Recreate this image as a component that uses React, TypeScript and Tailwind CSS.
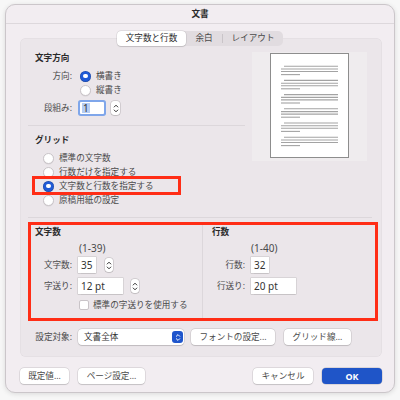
import type { ReactNode } from 'react';

const FONT = "font-['Noto_Sans','Noto_Sans_CJK_JP',sans-serif]";

function Radio({ on }: { on?: boolean }) {
  return on ? (
    <span className="flex size-[11px] shrink-0 items-center justify-center rounded-full bg-[#1f5ad6] shadow-[inset_0_0_0_0.5px_rgba(0,0,0,0.25)]">
      <span className="size-[4.5px] rounded-full bg-white" />
    </span>
  ) : (
    <span className="size-[11px] shrink-0 rounded-full border border-[#c9c4c8] bg-white shadow-[0_0.5px_0.5px_rgba(0,0,0,0.08)]" />
  );
}

function Stepper({ cls = '' }: { cls?: string }) {
  return (
    <span
      className={`flex h-[14px] w-[8px] items-center justify-center rounded-[3px] bg-white shadow-[0_0_0_0.5px_rgba(0,0,0,0.2),0_0.5px_1px_rgba(0,0,0,0.15)] ${cls}`}
    >
      <svg width="6" height="11" viewBox="0 0 6 11">
        <path
          d="M1.2 4 L3 2.2 L4.8 4 M1.2 7 L3 8.8 L4.8 7"
          stroke="#333"
          strokeWidth="1"
          fill="none"
          strokeLinecap="round"
          strokeLinejoin="round"
        />
      </svg>
    </span>
  );
}

function Input({ cls, children }: { cls: string; children: ReactNode }) {
  return (
    <span
      className={`flex h-[16px] items-center bg-white pl-[3px] text-[10px] leading-none text-[#333] shadow-[0_0_0_0.5px_rgba(0,0,0,0.16),0_0.5px_1px_rgba(0,0,0,0.08)] ${cls}`}
    >
      {children}
    </span>
  );
}

function Btn({ cls, children }: { cls: string; children: ReactNode }) {
  return (
    <span
      className={`flex h-[16px] items-center justify-center rounded-[4px] bg-white text-[8.6px] leading-none text-[#4a4a4a] shadow-[0_0_0_0.5px_rgba(0,0,0,0.15),0_0.5px_1px_rgba(0,0,0,0.12)] ${cls}`}
    >
      {children}
    </span>
  );
}

function PagePreview() {
  const groups = [0, 1, 2, 3, 4, 5];
  return (
    <svg width="77" height="103" viewBox="0 0 77 103">
      {groups.map((g) => {
        const y = 12.2 + g * 14.2;
        return (
          <g key={g} stroke="#a3a3a3" strokeWidth="1.1">
            <line x1="13" y1={y} x2="67" y2={y} />
            <line x1="10" y1={y + 2.8} x2="67" y2={y + 2.8} />
            <line x1="10" y1={y + 5.3} x2="67" y2={y + 5.3} />
            <line x1="10" y1={y + 8.4} x2="29" y2={y + 8.4} />
          </g>
        );
      })}
    </svg>
  );
}

export default function App() {
  const label = 'text-right text-[8.6px] leading-[12px] text-[#4a4a4a]';
  const head = 'text-[8.6px] font-bold leading-[12px] text-[#2a2a2a]';
  const body = 'text-[8.6px] leading-[12px] text-[#4a4a4a]';

  return (
    <div className={`h-[400px] w-[400px] bg-[#f7f7f7] pl-[5px] pt-[4px] ${FONT}`}>
      <div className="flex h-[389px] w-[390px] flex-col rounded-[10px] border border-[#cbc6ca] bg-[#f2edf1] shadow-[0_1px_5px_rgba(0,0,0,0.12)]">
        {/* title bar */}
        <div className="flex h-[19px] shrink-0 items-center justify-center border-b border-[#ddd8dc] text-[8.6px] font-bold leading-none text-[#2a2a2a]">
          文書
        </div>

        {/* tabs */}
        <div className="relative z-10 -mb-[8px] mt-[7px] flex justify-center">
          <div className="flex h-[15px] w-[166px] items-center rounded-[5px] bg-[#e1dce0] text-[8.6px] leading-none text-[#4a4a4a]">
            <span className="flex h-[15px] w-[69px] items-center justify-center rounded-[4px] bg-white text-[#2a2a2a] shadow-[0_0_0_0.5px_rgba(0,0,0,0.12),0_0.5px_1px_rgba(0,0,0,0.12)]">
              文字数と行数
            </span>
            <span className="flex w-[36px] justify-center">余白</span>
            <span className="h-[9px] w-px bg-[#c9c4c8]" />
            <span className="flex w-[60px] justify-center">レイアウト</span>
          </div>
        </div>

        {/* panel */}
        <div className="ml-[14px] flex h-[319px] w-[362px] flex-col rounded-[6px] bg-[#ebe6ea] shadow-[inset_0_0_0_0.5px_rgba(0,0,0,0.05)]">
          <div className="flex">
            <div className="flex w-[225px] flex-col">
              <div className={`mt-[14px] h-[12px] pl-[15px] ${head}`}>文字方向</div>
              <div className="mt-[6px] flex h-[12px] items-center">
                <span className={`w-[52px] ${label}`}>方向:</span>
                <span className="ml-[8px]">
                  <Radio on />
                </span>
                <span className={`ml-[5px] ${body}`}>横書き</span>
              </div>
              <div className="mt-[2px] flex h-[12px] items-center pl-[60px]">
                <Radio />
                <span className={`ml-[5px] ${body}`}>縦書き</span>
              </div>
              <div className="mt-[4px] flex h-[16px] items-center">
                <span className={`w-[52px] ${label}`}>段組み:</span>
                <span className="ml-[8px] flex h-[12px] w-[24px] items-center rounded-[1px] bg-white pl-[2px] text-[10px] leading-none text-[#333] ring-[2px] ring-[#7fa6ea]">
                  <span className="bg-[#b5cdf3] px-[1px]">1</span>
                </span>
                <Stepper cls="ml-[7px] w-[9px]" />
              </div>
              <div className="ml-[8px] mt-[9px] h-px w-[217px] bg-[#dcd7db]" />
              <div className={`mt-[8px] h-[12px] pl-[15px] ${head}`}>グリッド</div>
              <div className="mt-[5px] flex h-[14px] items-center gap-[5px] pl-[23px]">
                <Radio />
                <span className={body}>標準の文字数</span>
              </div>
              <div className="flex h-[14px] items-center gap-[5px] pl-[23px]">
                <Radio />
                <span className={body}>行数だけを指定する</span>
              </div>
              <div className="relative flex h-[14px] items-center gap-[5px] pl-[23px]">
                <Radio on />
                <span className={body}>文字数と行数を指定する</span>
                <span className="absolute left-[12px] top-[-3px] h-[19px] w-[149px] border-[3px] border-[#ff2d16]" />
              </div>
              <div className="flex h-[14px] items-center gap-[5px] pl-[23px]">
                <Radio />
                <span className={body}>原稿用紙の設定</span>
              </div>
            </div>

            <div className="ml-[7px] mt-[14px] h-[109px] w-[115px] bg-[#efecee]">
              <div className="ml-[18px] mt-[1px] h-[105px] w-[79px] border border-[#8d8d8d] bg-white">
                <PagePreview />
              </div>
            </div>
          </div>

          <div className="ml-[8px] mt-[10px] h-px w-[344px] bg-[#dcd7db]" />

          {/* highlighted section */}
          <div className="ml-[8px] mt-[4px] flex h-[99px] w-[350px] border-[3px] border-[#ff2d16]">
            <div className="flex w-[171px] flex-col">
              <div className={`mt-[1px] h-[12px] pl-[4px] ${head}`}>文字数</div>
              <div className="mt-[4px] h-[12px] pl-[48px] text-[10px] leading-[12px] text-[#4a4a4a]">(1-39)</div>
              <div className="mt-[3px] flex h-[16px] items-center">
                <span className={`w-[41px] ${label}`}>文字数:</span>
                <Input cls="ml-[6px] w-[18px]">35</Input>
                <Stepper cls="ml-[9px]" />
              </div>
              <div className="mt-[5px] flex h-[16px] items-center">
                <span className={`w-[41px] ${label}`}>字送り:</span>
                <Input cls="ml-[6px] w-[45px]">12 pt</Input>
                <Stepper cls="ml-[8px]" />
              </div>
              <div className="mt-[5px] flex h-[12px] items-center pl-[48px]">
                <span className="size-[10px] rounded-[2px] border border-[#c9c4c8] bg-white" />
                <span className={`ml-[4px] ${body}`}>標準の字送りを使用する</span>
              </div>
            </div>
            <div className="w-px bg-[#dcd7db]" />
            <div className="flex flex-1 flex-col">
              <div className={`mt-[1px] h-[12px] pl-[9px] ${head}`}>行数</div>
              <div className="mt-[4px] h-[12px] pl-[48px] text-[10px] leading-[12px] text-[#4a4a4a]">(1-40)</div>
              <div className="mt-[3px] flex h-[16px] items-center">
                <span className={`w-[42px] ${label}`}>行数:</span>
                <Input cls="ml-[6px] w-[18px]">32</Input>
              </div>
              <div className="mt-[5px] flex h-[16px] items-center">
                <span className={`w-[42px] ${label}`}>行送り:</span>
                <Input cls="ml-[6px] w-[45px]">20 pt</Input>
              </div>
            </div>
          </div>

          {/* target row */}
          <div className="mt-[8px] flex h-[16px] items-center">
            <span className={`ml-[15px] w-[37px] text-left ${label}`}>設定対象:</span>
            <span className="ml-[6px] flex h-[16px] w-[106px] items-center justify-between rounded-[4px] bg-white pl-[6px] pr-[1px] text-[8.6px] leading-none text-[#333] shadow-[0_0_0_0.5px_rgba(0,0,0,0.15),0_0.5px_1px_rgba(0,0,0,0.12)]">
              文書全体
              <span className="flex h-[12px] w-[11px] items-center justify-center rounded-[3px] bg-[#1f55cc]">
                <svg width="6" height="9" viewBox="0 0 6 9">
                  <path
                    d="M1.3 3.3 L3 1.6 L4.7 3.3 M1.3 5.7 L3 7.4 L4.7 5.7"
                    stroke="#fff"
                    strokeWidth="1"
                    fill="none"
                    strokeLinecap="round"
                    strokeLinejoin="round"
                  />
                </svg>
              </span>
            </span>
            <Btn cls="ml-[7px] w-[84px]">フォントの設定...</Btn>
            <Btn cls="ml-[9px] w-[67px]">グリッド線...</Btn>
          </div>
        </div>

        {/* footer buttons */}
        <div className="ml-[14px] mr-[12px] mt-[11px] flex h-[16px] items-center">
          <Btn cls="w-[49px]">既定値...</Btn>
          <Btn cls="ml-[9px] w-[67px]">ページ設定...</Btn>
          <Btn cls="ml-auto w-[60px]">キャンセル</Btn>
          <span className="ml-[9px] flex h-[16px] w-[60px] items-center justify-center rounded-[4px] bg-[#1f55c8] text-[9px] font-bold leading-none text-white shadow-[0_0_0_0.5px_rgba(0,0,0,0.2)]">
            OK
          </span>
        </div>
      </div>
    </div>
  );
}
